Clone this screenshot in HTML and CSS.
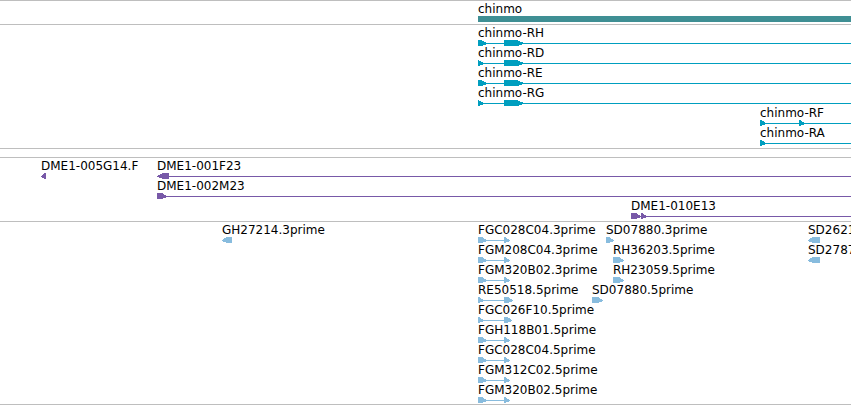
FILE: index.html
```html
<!DOCTYPE html>
<html lang="en">
<head>
<meta charset="utf-8">
<title>chinmo region</title>
<link rel="stylesheet" href="styles.css">
</head>
<body>
<main class="browser">
  <section class="track gene" aria-label="Gene">
    <div class="lane"><div class="feature wide" style="--x:478px"><span class="label">chinmo</span><div class="bar"></div></div></div>
  </section>

  <section class="track transcript" aria-label="Transcripts">
    <div class="lane"><div class="feature wide" style="--x:478px"><span class="label">chinmo-RH</span><svg class="glyph"><rect y="3" width="100%" height="1"/><path d="M0 0H3L9 3V4L3 6H0ZM26 0H39L46 3V4L39 6H26Z"/></svg></div></div>
    <div class="lane"><div class="feature wide" style="--x:478px"><span class="label">chinmo-RD</span><svg class="glyph"><rect y="3" width="100%" height="1"/><path d="M0 0L6 3V4L0 6ZM26 0H39L46 3V4L39 6H26Z"/></svg></div></div>
    <div class="lane"><div class="feature wide" style="--x:478px"><span class="label">chinmo-RE</span><svg class="glyph"><rect y="3" width="100%" height="1"/><path d="M0 0H3L9 3V4L3 6H0ZM26 0H39L46 3V4L39 6H26Z"/></svg></div></div>
    <div class="lane"><div class="feature wide" style="--x:478px"><span class="label">chinmo-RG</span><svg class="glyph"><rect y="3" width="100%" height="1"/><path d="M0 0L6 3V4L0 6ZM26 0H39L46 3V4L39 6H26Z"/></svg></div></div>
    <div class="lane"><div class="feature wide" style="--x:760px"><span class="label">chinmo-RF</span><svg class="glyph"><rect y="3" width="100%" height="1"/><path d="M0 0H1L6 3V4L1 6H0ZM39 0H40L45 3V4L40 6H39Z"/></svg></div></div>
    <div class="lane"><div class="feature wide" style="--x:760px"><span class="label">chinmo-RA</span><svg class="glyph"><rect y="3" width="100%" height="1"/><path d="M0 0H1L6 3V4L1 6H0Z"/></svg></div></div>
  </section>

  <section class="track clone" aria-label="Tiling clones">
    <div class="lane">
      <div class="feature" style="--x:41px"><span class="label">DME1-005G14.F</span><svg class="glyph"><path d="M5 0V6H4L0 4V3L4 0Z"/></svg></div>
      <div class="feature wide" style="--x:157px"><span class="label">DME1-001F23</span><svg class="glyph"><rect y="3" width="100%" height="1"/><path d="M12 0V6H6L0 4V3L6 0Z"/></svg></div>
    </div>
    <div class="lane"><div class="feature wide" style="--x:157px"><span class="label">DME1-002M23</span><svg class="glyph"><rect y="3" width="100%" height="1"/><path d="M0 0H5L10 3V4L5 6H0Z"/></svg></div></div>
    <div class="lane"><div class="feature wide" style="--x:631px"><span class="label">DME1-010E13</span><svg class="glyph"><rect y="3" width="100%" height="1"/><path d="M0 0H5L10 3V4L5 6H0ZM10 0H11L16 3V4L11 6H10Z"/></svg></div></div>
  </section>

  <section class="track est" aria-label="Expressed sequence tags">
    <div class="lane">
      <div class="feature" style="--x:222px"><span class="label">GH27214.3prime</span><svg class="glyph"><path d="M10 0V6H5L0 4V3L5 0Z"/></svg></div>
      <div class="feature" style="--x:478px"><span class="label">FGC028C04.3prime</span><svg class="glyph"><path d="M0 0H4L9 3H26V0H27L32 3V4L27 6H26V4H9L4 6H0Z"/></svg></div>
      <div class="feature" style="--x:606px"><span class="label">SD07880.3prime</span><svg class="glyph"><path d="M0 0H3L8 3V4L3 6H0Z"/></svg></div>
      <div class="feature" style="--x:808px"><span class="label">SD2621</span><svg class="glyph"><path d="M12 0V6H5L0 4V3L5 0Z"/></svg></div>
    </div>
    <div class="lane">
      <div class="feature" style="--x:478px"><span class="label">FGM208C04.3prime</span><svg class="glyph"><path d="M0 0H4L9 3H26V0H27L32 3V4L27 6H26V4H9L4 6H0Z"/></svg></div>
      <div class="feature" style="--x:613px"><span class="label">RH36203.5prime</span><svg class="glyph"><path d="M0 0H6L11 3V4L6 6H0Z"/></svg></div>
      <div class="feature" style="--x:808px"><span class="label">SD2787</span><svg class="glyph"><path d="M12 0V6H5L0 4V3L5 0Z"/></svg></div>
    </div>
    <div class="lane">
      <div class="feature" style="--x:478px"><span class="label">FGM320B02.3prime</span><svg class="glyph"><path d="M0 0H4L9 3H26V0H27L32 3V4L27 6H26V4H9L4 6H0Z"/></svg></div>
      <div class="feature" style="--x:613px"><span class="label">RH23059.5prime</span><svg class="glyph"><path d="M0 0H6L11 3V4L6 6H0Z"/></svg></div>
    </div>
    <div class="lane">
      <div class="feature" style="--x:478px"><span class="label">RE50518.5prime</span><svg class="glyph"><path d="M0 0H1L6 3H26V0H30L35 3V4L30 6H26V4H6L1 6H0Z"/></svg></div>
      <div class="feature" style="--x:592px"><span class="label">SD07880.5prime</span><svg class="glyph"><path d="M0 0H6L11 3V4L6 6H0Z"/></svg></div>
    </div>
    <div class="lane"><div class="feature" style="--x:478px"><span class="label">FGC026F10.5prime</span><svg class="glyph"><path d="M0 0H1L6 3H26V0H29L34 3V4L29 6H26V4H6L1 6H0Z"/></svg></div></div>
    <div class="lane"><div class="feature" style="--x:478px"><span class="label">FGH118B01.5prime</span><svg class="glyph"><path d="M0 0H4L9 3H26V0H27L32 3V4L27 6H26V4H9L4 6H0Z"/></svg></div></div>
    <div class="lane"><div class="feature" style="--x:478px"><span class="label">FGC028C04.5prime</span><svg class="glyph"><path d="M0 0H4L9 3H26V0H27L32 3V4L27 6H26V4H9L4 6H0Z"/></svg></div></div>
    <div class="lane"><div class="feature" style="--x:478px"><span class="label">FGM312C02.5prime</span><svg class="glyph"><path d="M0 0H4L9 3H26V0H27L32 3V4L27 6H26V4H9L4 6H0Z"/></svg></div></div>
    <div class="lane"><div class="feature" style="--x:478px"><span class="label">FGM320B02.5prime</span><svg class="glyph"><path d="M0 0H4L9 3H26V0H27L32 3V4L27 6H26V4H9L4 6H0Z"/></svg></div></div>
  </section>
</main>
</body>
</html>
```
FILE: styles.css
```css
body {
  margin: 0;
  background: #fff;
  color: #000;
  font: 12px/14px "DejaVu Sans", sans-serif;
}

.browser {
  overflow: hidden;
}

.track {
  border-top: 1px solid #bebebe;
  padding: 1px 0 2px;
}

.gene { color: #3f8f94; }
.transcript {
  color: #009ebf;
  border-bottom: 1px solid #bebebe;
  margin-bottom: 8px;
}
.clone { color: #7859a8; }
.est {
  color: #88bcde;
  border-bottom: 1px solid #bebebe;
  padding-bottom: 1px;
}

/* Features of one lane share a single cell and start at their own --x. */
.lane {
  display: grid;
  grid-template-columns: minmax(0, 1fr);
}

.feature {
  grid-area: 1 / 1;
  justify-self: start;
  margin-left: var(--x);
}

.wide {
  justify-self: stretch;
}

.label {
  display: block;
  color: #000;
  white-space: nowrap;
}

.bar {
  height: 6px;
  background: currentColor;
}

.glyph {
  display: block;
  width: 100%;
  height: 6px;
  fill: currentColor;
  shape-rendering: crispEdges;
}
```
